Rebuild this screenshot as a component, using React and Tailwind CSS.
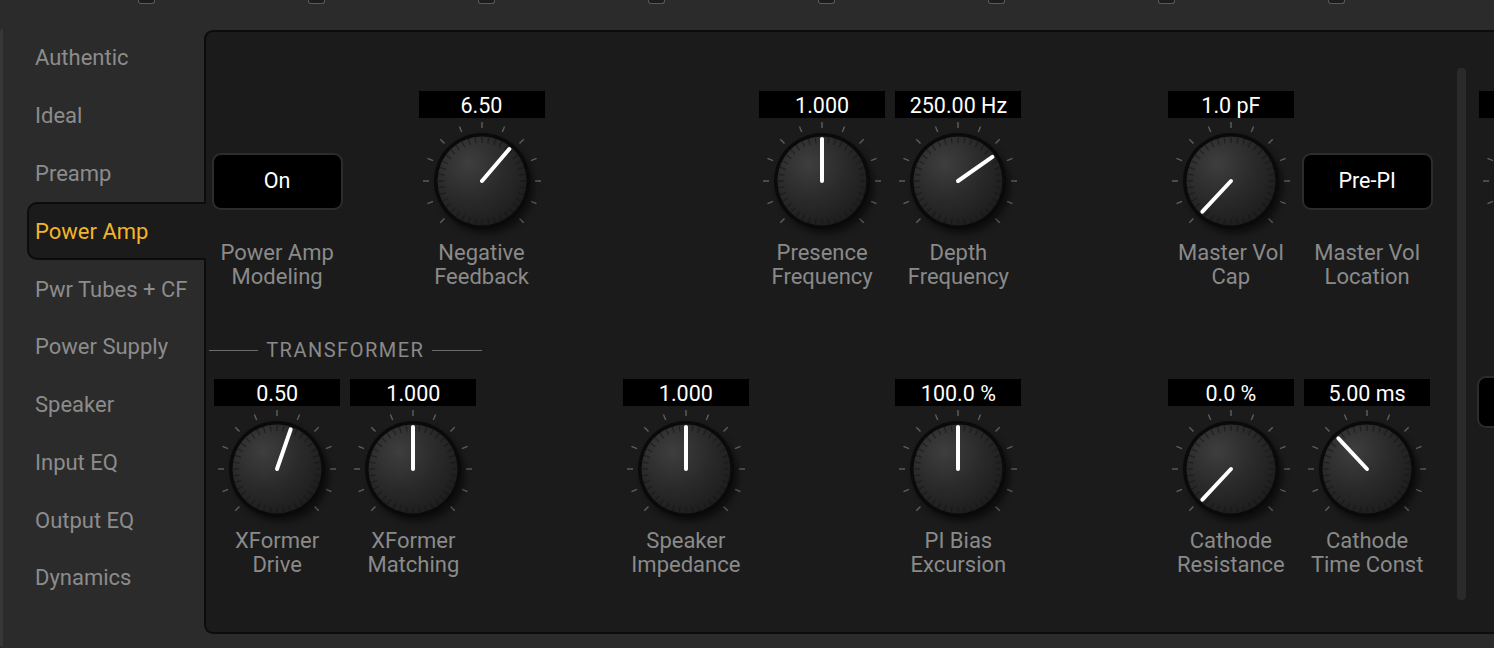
import { useId } from 'react'

const menuItems = [
  'Authentic',
  'Ideal',
  'Preamp',
  'Power Amp',
  'Pwr Tubes + CF',
  'Power Supply',
  'Speaker',
  'Input EQ',
  'Output EQ',
  'Dynamics',
]

const tickAngles = Array.from({ length: 13 }, (_, index) => -135 + index * 22.5)
const grooveAngles = Array.from({ length: 40 }, (_, index) => index * 9)

const polar = (cx, cy, radius, angle) => {
  const rad = (angle * Math.PI) / 180
  return [cx + radius * Math.sin(rad), cy - radius * Math.cos(rad)]
}

const Knob = ({ angle }) => {
  const id = useId().replace(/:/g, '')
  const cx = 62
  const cy = 60
  const [px, py] = polar(cx, cy, 42, angle)

  return (
    <svg width="124" height="120" viewBox="0 0 124 120" className="mt-[3px] block">
      <defs>
        <radialGradient id={`body-${id}`} cx="35%" cy="30%" r="75%">
          <stop offset="0%" stopColor="#3e3e3e" />
          <stop offset="55%" stopColor="#2a2a2a" />
          <stop offset="100%" stopColor="#1d1d1d" />
        </radialGradient>
        <filter id={`shadow-${id}`} x="-30%" y="-30%" width="160%" height="160%">
          <feGaussianBlur stdDeviation="3" />
        </filter>
      </defs>
      {tickAngles.map((tick) => {
        const [x1, y1] = polar(cx, cy, 53, tick)
        const [x2, y2] = polar(cx, cy, 59, tick)
        return (
          <line
            key={tick}
            x1={x1}
            y1={y1}
            x2={x2}
            y2={y2}
            stroke="#5e5e5e"
            strokeWidth="1.4"
          />
        )
      })}
      <circle
        cx={cx + 4}
        cy={cy + 5}
        r="48"
        fill="#000"
        opacity="0.5"
        filter={`url(#shadow-${id})`}
      />
      <circle cx={cx} cy={cy} r="48" fill="#0a0a0a" />
      <circle cx={cx} cy={cy} r="44.5" fill={`url(#body-${id})`} />
      {grooveAngles.map((groove) => {
        const [x1, y1] = polar(cx, cy, 38, groove)
        const [x2, y2] = polar(cx, cy, 44, groove)
        return (
          <line
            key={groove}
            x1={x1}
            y1={y1}
            x2={x2}
            y2={y2}
            stroke="#141414"
            strokeOpacity="0.55"
            strokeWidth="1.3"
          />
        )
      })}
      <line
        x1={cx}
        y1={cy}
        x2={px}
        y2={py}
        stroke="#fff"
        strokeWidth="4"
        strokeLinecap="round"
      />
    </svg>
  )
}

const Label = ({ lines }) => (
  <div className="text-[22px] leading-[24px] text-[#8a8a8a] text-center whitespace-nowrap">
    {lines.map((line) => (
      <div key={line}>{line}</div>
    ))}
  </div>
)

const KnobControl = ({ value, angle, lines, className = '' }) => (
  <div className={`flex flex-col items-center ${className}`}>
    <div className="w-[126px] h-[27px] bg-black text-white text-[21.5px] leading-[29px] text-center">
      {value}
    </div>
    <Knob angle={angle} />
    <Label lines={lines} />
  </div>
)

const ButtonControl = ({ text, lines, className = '' }) => (
  <div className={`flex flex-col items-center ${className}`}>
    <div className="h-[27px]" />
    <div className="mt-[3px] h-[120px] flex items-center justify-center">
      <div className="w-[131px] h-[57px] bg-black border-2 border-[#2c2c2c] rounded-[9px] flex items-center justify-center text-white text-[21.5px]">
        {text}
      </div>
    </div>
    <Label lines={lines} />
  </div>
)

const App = () => {
  return (
    <div
      className="w-[1494px] h-[648px] bg-[#2b2b2b] overflow-hidden"
      style={{ fontFamily: 'Roboto, "Noto Sans", sans-serif' }}
    >
      <div className="h-[4px] flex pl-[138px] gap-[153px]">
        {Array.from({ length: 8 }, (_, index) => (
          <div
            key={index}
            className="w-[17px] h-[4px] bg-[#1c1c1c] border-x border-b border-[#5a5a5a] rounded-b-[3px]"
          />
        ))}
      </div>

      <div className="flex">
        <div className="w-[204px] flex-none mt-[25px] h-[617px] border-l-[3px] border-[#373737] rounded-tl-[3px]">
          {menuItems.map((item) =>
            item === 'Power Amp' ? (
              <div
                key={item}
                className="relative z-10 ml-[24px] w-[179px] h-[58px] bg-[#1b1b1b] border-2 border-r-0 border-[#0c0c0c] rounded-l-[10px] flex items-center pl-[6px] text-[22px] text-[#f3b42a]"
              >
                {item}
              </div>
            ) : (
              <div
                key={item}
                className="h-[57.75px] flex items-center pl-[32px] text-[22px] text-[#8c8c8c]"
              >
                {item}
              </div>
            ),
          )}
        </div>

        <div className="flex-1 mt-[26px] h-[604px] bg-[#1b1b1b] border-2 border-r-0 border-[#0c0c0c] rounded-l-[9px] flex overflow-hidden">
          <div className="flex-none pl-[3px] pt-[59px]">
            <div className="grid grid-cols-[repeat(9,136.25px)]">
              <ButtonControl text="On" lines={['Power Amp', 'Modeling']} className="col-start-1" />
              <KnobControl value="6.50" angle={40.5} lines={['Negative', 'Feedback']} className="col-start-2 col-span-2" />
              <KnobControl value="1.000" angle={0} lines={['Presence', 'Frequency']} className="col-start-5" />
              <KnobControl value="250.00 Hz" angle={55} lines={['Depth', 'Frequency']} className="col-start-6" />
              <KnobControl value="1.0 pF" angle={-137} lines={['Master Vol', 'Cap']} className="col-start-8" />
              <ButtonControl text="Pre-PI" lines={['Master Vol', 'Location']} className="col-start-9" />
            </div>

            <div className="grid grid-cols-[repeat(9,136.25px)] mt-[49px]">
              <div className="col-span-2 flex items-center justify-center gap-[8px] h-[24px]">
                <div className="w-[50px] h-px bg-[#6c6c6c]" />
                <div className="text-[20px] leading-[24px] tracking-[1.5px] text-[#8a8a8a]">
                  TRANSFORMER
                </div>
                <div className="w-[50px] h-px bg-[#6c6c6c]" />
              </div>
            </div>

            <div className="grid grid-cols-[repeat(9,136.25px)] mt-[17px]">
              <KnobControl value="0.50" angle={19} lines={['XFormer', 'Drive']} className="col-start-1" />
              <KnobControl value="1.000" angle={0} lines={['XFormer', 'Matching']} className="col-start-2" />
              <KnobControl value="1.000" angle={0} lines={['Speaker', 'Impedance']} className="col-start-4" />
              <KnobControl value="100.0 %" angle={0} lines={['PI Bias', 'Excursion']} className="col-start-6" />
              <KnobControl value="0.0 %" angle={-137} lines={['Cathode', 'Resistance']} className="col-start-8" />
              <KnobControl value="5.00 ms" angle={-43} lines={['Cathode', 'Time Const']} className="col-start-9" />
            </div>
          </div>

          <div className="flex-none ml-[22px] mt-[36px] w-[9px] h-[532px] bg-[#2a2a2a] rounded-[4px]" />

          <div className="flex-none ml-[8px] pt-[59px] w-[136px] flex flex-col items-center">
            <div className="w-[126px] h-[27px] bg-black" />
            <Knob angle={0} />
            <div className="mt-[135px] w-[131px] h-[52px] bg-black border-2 border-[#2c2c2c] rounded-[9px]" />
          </div>
        </div>
      </div>
    </div>
  )
}

export default App
